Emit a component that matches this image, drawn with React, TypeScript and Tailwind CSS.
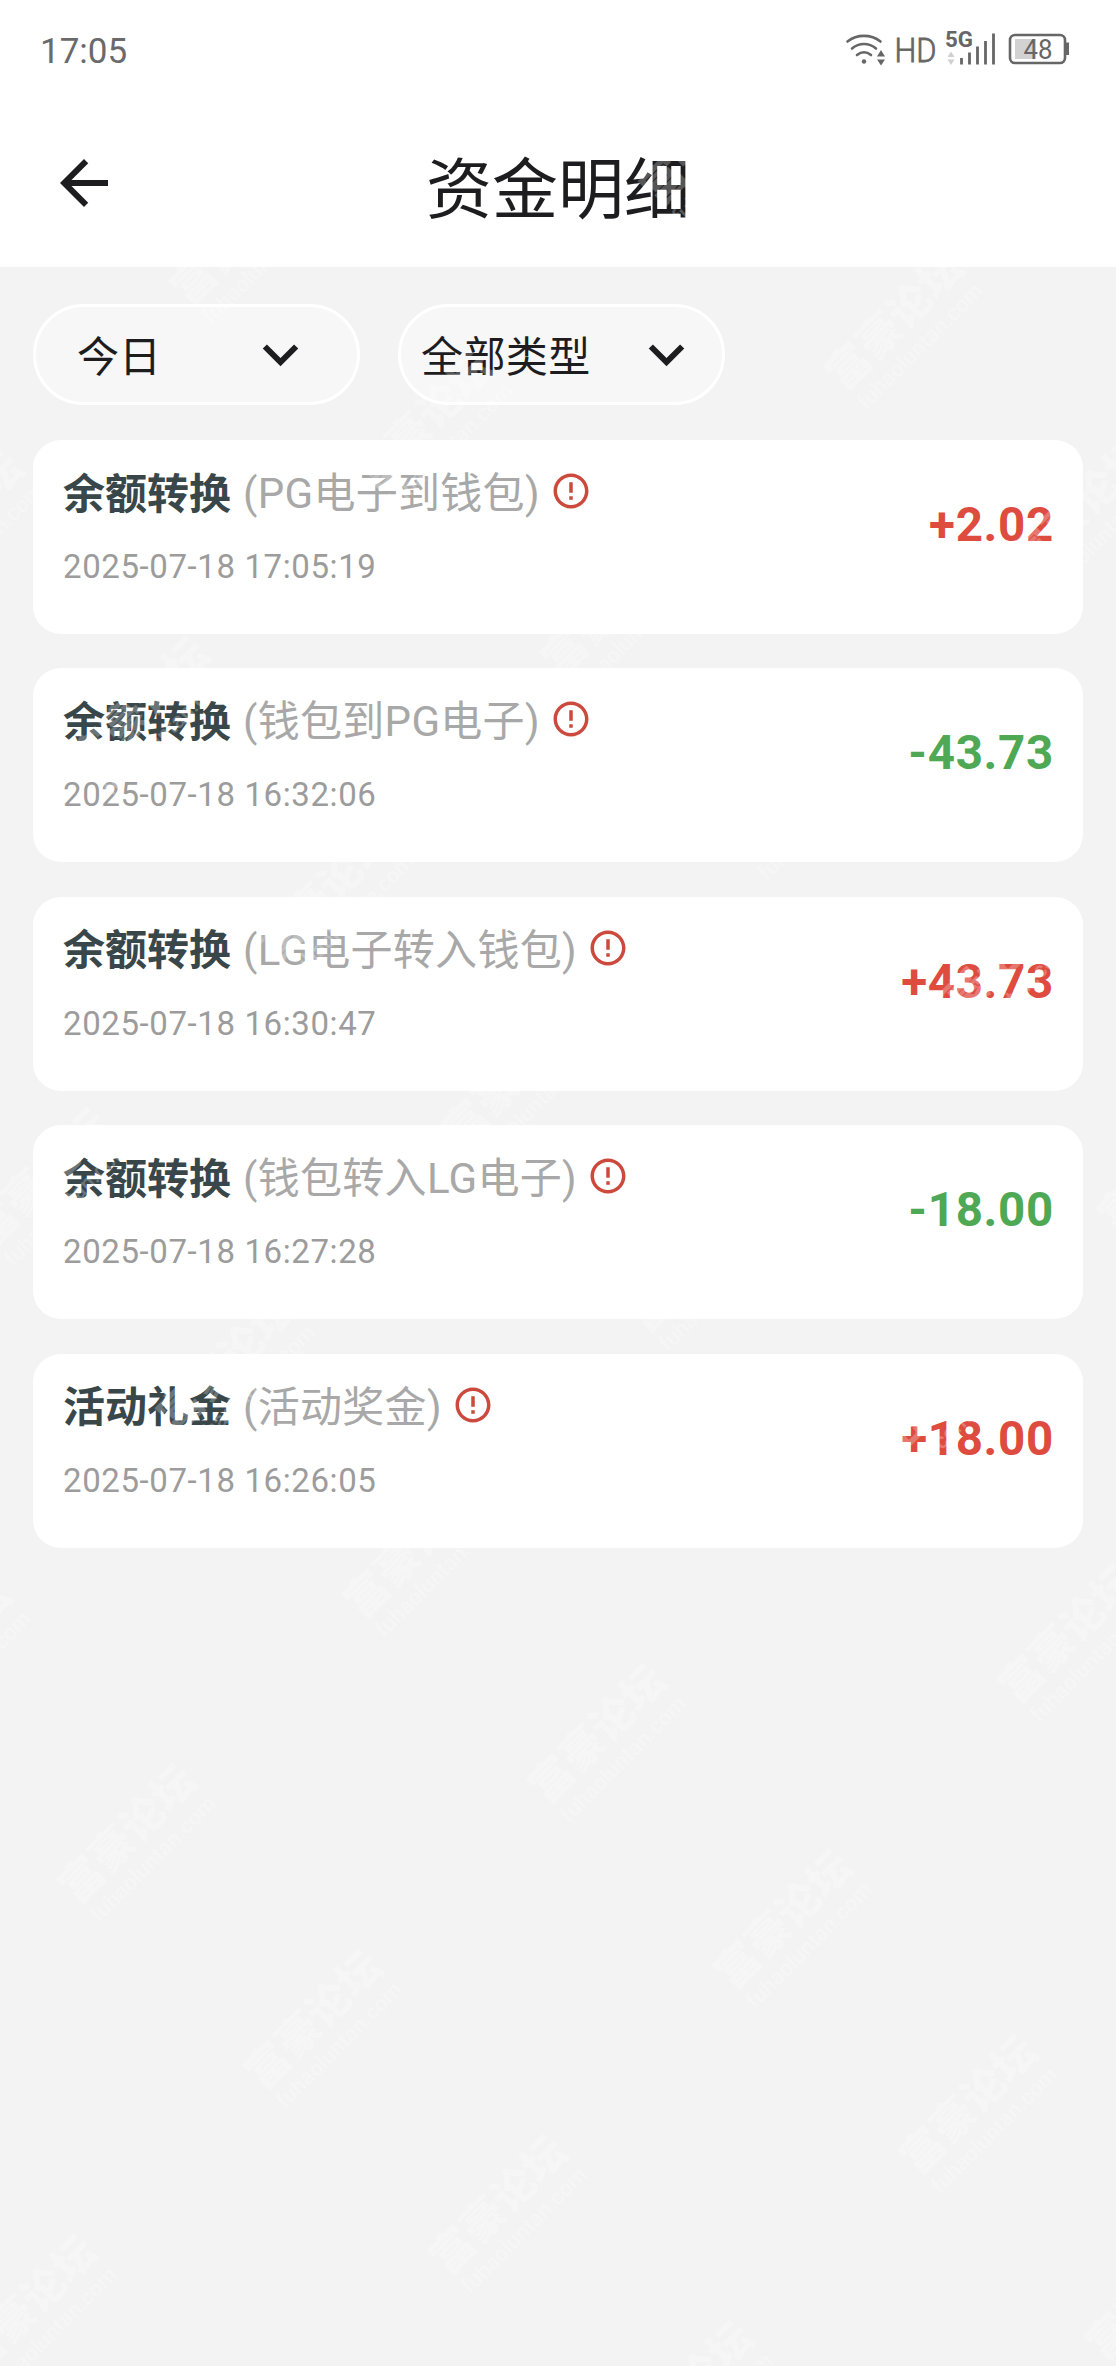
import { MdArrowBack, MdErrorOutline, MdExpandMore } from 'react-icons/md';

type RecordItem = {
  id: number;
  title: string;
  detail: string;
  time: string;
  amount: string;
};

const records: RecordItem[] = [
  { id: 1, title: '余额转换', detail: '(PG电子到钱包)', time: '2025-07-18 17:05:19', amount: '+2.02' },
  { id: 2, title: '余额转换', detail: '(钱包到PG电子)', time: '2025-07-18 16:32:06', amount: '-43.73' },
  { id: 3, title: '余额转换', detail: '(LG电子转入钱包)', time: '2025-07-18 16:30:47', amount: '+43.73' },
  { id: 4, title: '余额转换', detail: '(钱包转入LG电子)', time: '2025-07-18 16:27:28', amount: '-18.00' },
  { id: 5, title: '活动礼金', detail: '(活动奖金)', time: '2025-07-18 16:26:05', amount: '+18.00' },
];

// Watermarks repeat on a slanted grid across the whole page
const marks: { x: number; y: number }[] = [];
for (let row = -14; row <= 8; row++) {
  for (let col = -6; col <= 6; col++) {
    const x = 607 + row * 185.5 - col * 470;
    const y = 1743 + row * 185.5 + col * 100;
    if (x > -80 && x < 1196 && y > 100 && y < 2446) {
      marks.push({ x, y });
    }
  }
}

function Watermark() {
  return (
    <div className="pointer-events-none absolute inset-0 overflow-hidden" aria-hidden="true">
      {marks.map((mark) => (
        <div
          key={`${mark.x}-${mark.y}`}
          className="absolute flex h-[72px] w-[176px] -translate-x-1/2 -translate-y-1/2 -rotate-45 flex-col items-center whitespace-nowrap text-white opacity-25"
          style={{ left: mark.x, top: mark.y }}
        >
          <span className="text-[43px] leading-[46px] font-black">富豪论坛</span>
          <span className="text-[22px] leading-[26px] font-medium">fuhaoluntan.com</span>
        </div>
      ))}
    </div>
  );
}

function StatusIcons() {
  return (
    <svg className="h-10 w-[226px]" viewBox="844 30 226 40" fill="none" stroke="#666666">
      {/* Wifi */}
      <g strokeWidth="2.6" strokeLinecap="round">
        <path d="M847.5 41.5C857 34 871 34 880.5 41.5" />
        <path d="M852 48.5C859 42.5 869 42.5 876 48.5" />
        <path d="M857 55C861.5 51.5 866.5 51.5 871 55" />
      </g>
      <circle cx="864" cy="61.5" r="2.2" fill="#666666" stroke="none" />
      <path d="M877 56.5L881 50L885 56.5ZM877 59.5H885L881 65.5Z" fill="#666666" stroke="none" />

      <text x="894.5" y="62" fontSize="33" fontWeight="300" fill="#666666" strokeWidth="0.8" textLength="42" lengthAdjust="spacingAndGlyphs">HD</text>

      {/* Mobile signal */}
      <text x="945" y="47" fontSize="22" fontWeight="700" fill="#666666" stroke="none" textLength="28" lengthAdjust="spacingAndGlyphs">5G</text>
      <path d="M947.5 57L951 51.5L954.5 57ZM947.5 59.5H954.5L951 65Z" fill="#d0d0d0" stroke="none" />
      <path d="M961.5 58V64.5M969.5 52.5V64.5M977.5 46.5V64.5M985.5 41V64.5M993.5 33.5V64.5" strokeWidth="2.8" />

      {/* Battery */}
      <rect x="1015" y="39" width="21" height="20" fill="#d2d2d2" stroke="none" />
      <rect x="1010" y="35" width="55" height="28" rx="5" strokeWidth="2.6" />
      <path d="M1066 42.5H1069V55H1066Z" fill="#666666" stroke="none" />
      <text x="1023.5" y="59" fontSize="27" fill="#666666" stroke="none" textLength="29" lengthAdjust="spacingAndGlyphs">48</text>
    </svg>
  );
}

function RecordCard({ record }: { record: RecordItem }) {
  const isIncome = record.amount.startsWith('+');

  return (
    <div className="flex h-[194px] justify-between rounded-[28px] bg-white pr-[29px] pl-[30px]">
      <div className="flex flex-col pt-[28px]">
        <div className="flex h-[52px] items-center text-[42px] leading-[52px]">
          <span className="pt-px font-bold text-[#39474a]">{record.title}</span>
          <span className="ml-3 tracking-[0.3px] text-[#a8a8a8]">{record.detail}</span>
          <MdErrorOutline className="mb-[6px] ml-2.5 size-[42px] text-[#cc4a3d]" />
        </div>
        <span className="mt-[27px] text-[33px] leading-[40px] tracking-[0.6px] text-[#9c9c9c]">{record.time}</span>
      </div>
      <span
        className={`pt-[57px] text-[47.5px] leading-[56px] font-bold tracking-[0.7px] ${
          isIncome ? 'text-[#de4b3f]' : 'text-[#4fa853]'
        }`}
      >
        {record.amount}
      </span>
    </div>
  );
}

export default function App() {
  return (
    <div className="relative h-[2366px] w-[1116px] overflow-hidden bg-[#f3f3f3] font-['Roboto','Noto_Sans_CJK_SC',sans-serif]">
      <header className="h-[267px] bg-white">
        <div className="flex h-[100px] items-start justify-between pt-[30px] pr-[46px] pl-[40px]">
          <span className="pt-px text-[35px] leading-[42px] text-[#6a6a6a]">17:05</span>
          <StatusIcons />
        </div>
        <div className="grid h-[167px] grid-cols-[1fr_auto_1fr] items-start">
          <MdArrowBack className="mt-[47px] ml-[48px] size-[72px] text-[#1d1d1f]" />
          <h1 className="mt-[46px] text-[66px] leading-[90px] text-[#1d1d1f]">资金明细</h1>
        </div>
      </header>

      {/* Filters */}
      <div className="flex gap-[38px] px-[33px] pt-[37px] text-[42px] leading-[60px] text-[#1d1d1f]">
        <button className="flex h-[101px] w-[327px] items-center justify-between rounded-full border-3 border-white bg-[#f7f7f7] pr-[41px] pl-[41px]">
          <span className="pt-[6px]">今日</span>
          <MdExpandMore className="size-[71px]" />
        </button>
        <button className="flex h-[101px] w-[327px] items-center justify-between rounded-full border-3 border-white bg-[#f7f7f7] pr-[20px] pl-[20px]">
          <span className="pt-[6px] tracking-[0.4px]">全部类型</span>
          <MdExpandMore className="size-[71px]" />
        </button>
      </div>

      <main className="mt-[35px] flex flex-col gap-[34.4px] px-[33px]">
        {records.map((record) => (
          <RecordCard key={record.id} record={record} />
        ))}
      </main>

      <Watermark />
    </div>
  );
}
